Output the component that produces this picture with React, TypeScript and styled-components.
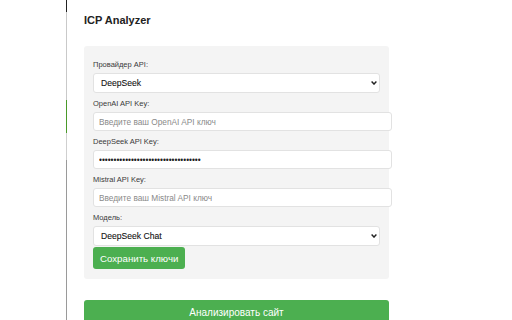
import React from 'react';
import styled, { createGlobalStyle } from 'styled-components';

const GlobalStyle = createGlobalStyle`
  html, body {
    margin: 0;
    background: #ffffff;
    font-family: "Liberation Sans", Arial, sans-serif;
  }
`;

const Page = styled.div`
  display: flex;
  gap: 17px;
  padding-left: 66px;
  height: 320px;
  overflow: hidden;
`;

// thin window edge on the left, with a green highlight
const Rail = styled.div`
  width: 1px;
  flex: none;
  background: linear-gradient(
    to bottom,
    #222 0,
    #222 12px,
    #c9c9c9 12px,
    #c9c9c9 100px,
    #4a9a2a 100px,
    #4a9a2a 133px,
    #cfcfcf 133px,
    #cfcfcf 160px,
    #9a9a9a 160px,
    #9a9a9a 100%
  );
`;

const Main = styled.div`
  width: 305px;
  flex: none;
`;

const Title = styled.h1`
  margin: 14px 0 19px;
  font-size: 11px;
  line-height: 13px;
  font-weight: bold;
  color: #222;
`;

const Panel = styled.div`
  background: #f4f4f4;
  border-radius: 3px;
  padding: 8px 9px 10px;
`;

const Label = styled.label`
  display: block;
  margin: 6px 0 3px;
  font-size: 7.5px;
  line-height: 10px;
  color: #3a3a3a;
`;

const SelectWrap = styled.div`
  position: relative;
`;

const Select = styled.select`
  display: block;
  width: 100%;
  height: 20px;
  margin: 0;
  padding: 0 16px 0 7px;
  border: 1px solid #e2e2e2;
  border-radius: 3px;
  background: #fff;
  appearance: none;
  font-family: "Liberation Sans", Arial, sans-serif;
  font-size: 8.6px;
  color: #111;
  -webkit-text-stroke: 0.1px #111;
`;

const Chevron = styled.svg`
  position: absolute;
  right: 3px;
  top: 8px;
  width: 6px;
  height: 4px;
  pointer-events: none;
`;

const Input = styled.input`
  display: block;
  width: 100%;
  height: 17px;
  margin: 0;
  padding: 0 5px;
  border: 1px solid #e2e2e2;
  border-radius: 3px;
  background: #fff;
  font-family: "Liberation Sans", Arial, sans-serif;
  font-size: 8.3px;
  color: #222;
  &::placeholder {
    color: #8a8a8a;
  }
`;

const Button = styled.button<{ $wide?: boolean }>`
  display: block;
  width: ${p => (p.$wide ? '100%' : 'auto')};
  height: ${p => (p.$wide ? '24px' : '22px')};
  margin-top: ${p => (p.$wide ? '21px' : '1px')};
  padding: 0 7px;
  border: none;
  border-radius: 3px;
  background: #4caf50;
  color: #fff;
  font-family: "Liberation Sans", Arial, sans-serif;
  font-size: ${p => (p.$wide ? '10px' : '9.7px')};
  cursor: pointer;
`;

function Dropdown({ value, options }: { value: string; options: string[] }) {
  return (
    <SelectWrap>
      <Select defaultValue={value}>
        {options.map(o => (
          <option key={o} value={o}>
            {o}
          </option>
        ))}
      </Select>
      <Chevron viewBox="0 0 6 4">
        <path d="M0.6 0.6 L3 3.1 L5.4 0.6" fill="none" stroke="#222" strokeWidth="1.4" />
      </Chevron>
    </SelectWrap>
  );
}

export default function App() {
  return (
    <>
      <GlobalStyle />
      <Page>
        <Rail />
        <Main>
          <Title>ICP Analyzer</Title>
          <Panel>
            <Label>Провайдер API:</Label>
            <Dropdown value="DeepSeek" options={['OpenAI', 'DeepSeek', 'Mistral']} />
            <Label>OpenAI API Key:</Label>
            <Input type="password" placeholder="Введите ваш OpenAI API ключ" />
            <Label>DeepSeek API Key:</Label>
            <Input type="password" defaultValue="sk-3f9a1c7e5b2d4086a1e9c3b7d5f20a48" />
            <Label>Mistral API Key:</Label>
            <Input type="password" placeholder="Введите ваш Mistral API ключ" />
            <Label>Модель:</Label>
            <Dropdown value="DeepSeek Chat" options={['DeepSeek Chat', 'DeepSeek Coder']} />
            <Button>Сохранить ключи</Button>
          </Panel>
          <Button $wide>Анализировать сайт</Button>
        </Main>
      </Page>
    </>
  );
}
